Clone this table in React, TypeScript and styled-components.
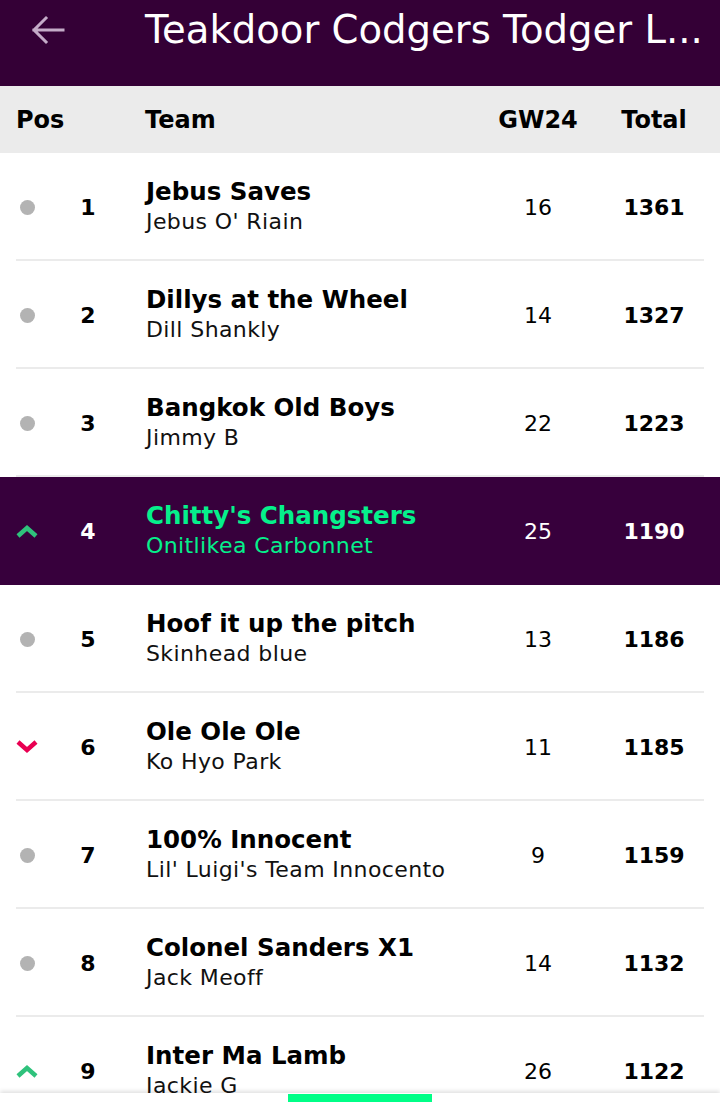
import styled, { createGlobalStyle } from "styled-components";

type Movement = "same" | "up" | "down";

type Entry = {
  pos: number;
  team: string;
  manager: string;
  gw: number;
  total: number;
  move: Movement;
  mine?: boolean;
};

const entries: Entry[] = [
  { pos: 1, team: "Jebus Saves", manager: "Jebus O' Riain", gw: 16, total: 1361, move: "same" },
  { pos: 2, team: "Dillys at the Wheel", manager: "Dill Shankly", gw: 14, total: 1327, move: "same" },
  { pos: 3, team: "Bangkok Old Boys", manager: "Jimmy B", gw: 22, total: 1223, move: "same" },
  { pos: 4, team: "Chitty's Changsters", manager: "Onitlikea Carbonnet", gw: 25, total: 1190, move: "up", mine: true },
  { pos: 5, team: "Hoof it up the pitch", manager: "Skinhead blue", gw: 13, total: 1186, move: "same" },
  { pos: 6, team: "Ole Ole Ole", manager: "Ko Hyo Park", gw: 11, total: 1185, move: "down" },
  { pos: 7, team: "100% Innocent", manager: "Lil' Luigi's Team Innocento", gw: 9, total: 1159, move: "same" },
  { pos: 8, team: "Colonel Sanders X1", manager: "Jack Meoff", gw: 14, total: 1132, move: "same" },
  { pos: 9, team: "Inter Ma Lamb", manager: "Jackie G", gw: 26, total: 1122, move: "up" },
];

export default function App() {
  return (
    <>
      <GlobalStyle />
      <Screen>
        <TopBar>
          <BackButton aria-label="Back">
            <svg width="34" height="30" viewBox="0 0 34 30" fill="none">
              <path
                d="M32 15H3M15 3L3 15l12 12"
                stroke="currentColor"
                strokeWidth="3"
                strokeLinecap="square"
              />
            </svg>
          </BackButton>
          <Title>Teakdoor Codgers Todger L...</Title>
        </TopBar>

        <HeadRow>
          <HeadCell>Pos</HeadCell>
          <HeadCell>Team</HeadCell>
          <HeadCell $center>GW24</HeadCell>
          <HeadCell $center>Total</HeadCell>
        </HeadRow>

        {entries.map((entry) => (
          <Row key={entry.pos} $mine={entry.mine}>
            <RowInner $mine={entry.mine}>
              <MoveCell>
                <MoveIcon move={entry.move} />
              </MoveCell>
              <PosNum $mine={entry.mine}>{entry.pos}</PosNum>
              <TeamCell>
                <TeamName $mine={entry.mine}>{entry.team}</TeamName>
                <Manager $mine={entry.mine}>{entry.manager}</Manager>
              </TeamCell>
              <GwNum $mine={entry.mine}>{entry.gw}</GwNum>
              <TotalNum $mine={entry.mine}>{entry.total}</TotalNum>
            </RowInner>
          </Row>
        ))}

        <BottomTray>
          <Indicator />
        </BottomTray>
      </Screen>
    </>
  );
}

function MoveIcon({ move }: { move: Movement }) {
  if (move === "same") return <Dot />;
  const up = move === "up";
  return (
    <svg width="22" height="14" viewBox="0 0 22 14">
      <path
        d={up ? "M2 12L11 4l9 8" : "M2 2l9 8 9-8"}
        stroke={up ? "#2fc27c" : "#e90052"}
        strokeWidth="4.5"
        fill="none"
      />
    </svg>
  );
}

const GlobalStyle = createGlobalStyle`
  html, body {
    margin: 0;
    padding: 0;
    background: #ffffff;
    overflow: hidden;
  }
  body {
    font-family: "DejaVu Sans", Lato, Arial, sans-serif;
    color: #000;
  }
`;

const Screen = styled.div`
  width: 720px;
  height: 1102px;
  overflow: hidden;
  position: relative;
  background: #fff;
`;

const TopBar = styled.header`
  height: 86px;
  background: #340036;
  display: flex;
  align-items: flex-start;
  padding-left: 31px;
  box-sizing: border-box;
`;

const BackButton = styled.div`
  color: #c4abc8;
  display: flex;
  padding-top: 15px;
  width: 114px;
`;

const Title = styled.h1`
  margin: 0;
  padding-top: 8px;
  font-size: 38.6px;
  line-height: 44px;
  font-weight: 400;
  color: #ffffff;
  white-space: nowrap;
`;

const HeadRow = styled.div`
  height: 67px;
  background: #ebebeb;
  display: grid;
  grid-template-columns: 129px 1fr 132px 100px;
  align-items: center;
  padding: 0 16px;
  box-sizing: border-box;
`;

const HeadCell = styled.div<{ $center?: boolean }>`
  font-weight: 700;
  font-size: 24px;
  text-align: ${(p) => (p.$center ? "center" : "left")};
`;

const Row = styled.div<{ $mine?: boolean }>`
  height: 108px;
  background: ${(p) => (p.$mine ? "#37003c" : "#fff")};
  padding: 0 16px;
  box-sizing: border-box;
`;

const RowInner = styled.div<{ $mine?: boolean }>`
  height: 100%;
  display: grid;
  grid-template-columns: 22px 100px 1fr 132px 100px;
  align-items: center;
  border-bottom: 2px solid ${(p) => (p.$mine ? "transparent" : "#ebebeb")};
  box-sizing: border-box;
  padding-top: 2px;
`;

const MoveCell = styled.div`
  display: flex;
  justify-content: center;
`;

const Dot = styled.span`
  width: 15px;
  height: 15px;
  border-radius: 50%;
  background: #b3b3b3;
`;

const PosNum = styled.div<{ $mine?: boolean }>`
  font-size: 22px;
  font-weight: 700;
  text-align: center;
  color: ${(p) => (p.$mine ? "#fff" : "#000")};
`;

const TeamCell = styled.div`
  align-self: start;
  display: flex;
  flex-direction: column;
  padding: 22px 0 0 8px;
  min-width: 0;
`;

const TeamName = styled.div<{ $mine?: boolean }>`
  font-size: 24.5px;
  font-weight: 700;
  line-height: 30px;
  color: ${(p) => (p.$mine ? "#05f08b" : "#000")};
  white-space: nowrap;
`;

const Manager = styled.div<{ $mine?: boolean }>`
  font-size: 22px;
  letter-spacing: 0.4px;
  line-height: 30px;
  color: ${(p) => (p.$mine ? "#05f08b" : "#111")};
  white-space: nowrap;
`;

const GwNum = styled.div<{ $mine?: boolean }>`
  font-size: 22px;
  text-align: center;
  color: ${(p) => (p.$mine ? "#fff" : "#000")};
`;

const TotalNum = styled.div<{ $mine?: boolean }>`
  font-size: 22px;
  font-weight: 700;
  text-align: center;
  color: ${(p) => (p.$mine ? "#fff" : "#000")};
`;

const BottomTray = styled.div`
  position: absolute;
  left: 0;
  right: 0;
  bottom: 0;
  height: 9px;
  background: #fff;
  box-shadow: 0 -2px 4px rgba(0, 0, 0, 0.12);
  display: flex;
  justify-content: center;
  align-items: flex-end;
`;

const Indicator = styled.div`
  width: 144px;
  height: 8px;
  background: #00ff87;
`;
